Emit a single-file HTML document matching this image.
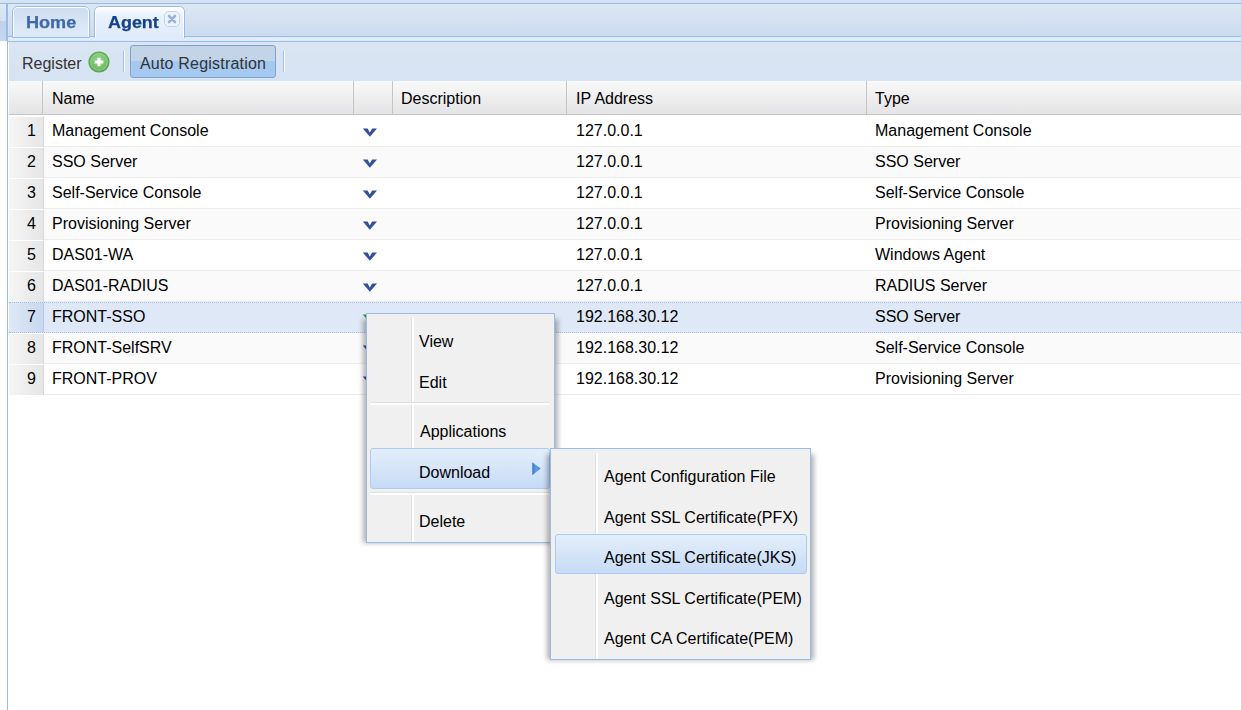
<!DOCTYPE html>
<html><head><meta charset="utf-8"><style>
*{box-sizing:border-box;margin:0;padding:0}
html,body{width:1241px;height:710px;overflow:hidden;background:#fff;font-family:"Liberation Sans",sans-serif;font-size:16px;color:#000;position:relative}
.abs{position:absolute}
#topbar{position:absolute;left:0;top:0;width:1241px;height:3px;background:#d6e2f1}
#topline{position:absolute;left:0;top:3px;width:1241px;height:1px;background:#99bbe8}
#leftstrip{position:absolute;left:0;top:4px;width:6px;height:37px;background:linear-gradient(#dfe9f6 0,#d3e1f3 17px,#bfd3ee 17px,#c4d7f0 37px)}
#leftline{position:absolute;left:6px;top:4px;width:2px;height:37px;background:#99bbe8}
#panelline{position:absolute;left:7px;top:41px;width:1px;height:669px;background:#99bbe8}
#tabbar{position:absolute;left:8px;top:4px;width:1233px;height:32px;background:linear-gradient(#dde7f4,#ccdbef)}
#strip{position:absolute;left:7px;top:36px;width:1234px;height:6px;background:#deecfd;border-top:1px solid #99bbe8;border-bottom:1px solid #99bbe8}
.tab{position:absolute;top:6px;border:1px solid #99bbe8;border-bottom:none;border-radius:6px 6px 0 0;font-weight:bold;font-size:16px;}
.tab .in{position:absolute;left:0;top:0;right:0;bottom:0;border:1px solid #fff;border-bottom:none;border-radius:5px 5px 0 0}
#tab1{left:12px;width:78px;background:linear-gradient(#cfddf0,#e0ebf9);color:#3e69a6;height:32px;border-bottom:1px solid #99bbe8}
#tab2{left:94px;width:91px;background:linear-gradient(#ffffff 0,#e9f1fb 9px,#dfeafa 100%);color:#15428b;height:32px}
.tab span{position:absolute;top:6px;line-height:20px}
#close{position:absolute;left:69px;top:4px;width:16px;height:16px}
#toolbar{position:absolute;left:9px;top:42px;width:1232px;height:39px;background:linear-gradient(#dbe5f3,#d6e3f2)}
.tbtext{position:absolute;color:#333;line-height:20px}
.sep{position:absolute;top:51px;width:2px;height:21px;border-left:1px solid #98c0f4;border-right:1px solid #fff}
#autobtn{position:absolute;left:130px;top:45px;width:146px;height:33px;border:1px solid #7fa3cf;border-radius:3px;background:linear-gradient(#c4d4e8 0,#c4d4e8 15px,#a5c8f0 15px,#a6c9f1 100%)}
#hdr{position:absolute;left:9px;top:81px;width:1232px;height:34px;background:linear-gradient(#f9f9f9,#e4e4e6);border-bottom:1px solid #c5c5c5}
.hsep{position:absolute;top:81px;width:1px;height:33px;background:#c5c5c5}
.htext{position:absolute;top:89px;line-height:20px;color:#000}
.row{position:absolute;left:9px;width:1232px;height:31px;background:#fff;border-top:1px solid #fff;border-bottom:1px solid #ededed}
.row.alt{background:#fafafa;border-top-color:#fafafa}
.row.sel{background:#dfe8f6;border-top:1px dotted #a3bae9;border-bottom:1px dotted #a3bae9}
.num{position:absolute;left:0;top:-1px;width:35px;height:31px;border-top:1px solid #fff;background:linear-gradient(90deg,#f5f5f5,#e6e6e6);border-right:1px solid #d8d8d8}
.sel .num{top:0;height:29px;border-top:none;background:linear-gradient(90deg,#dfe8f6,#c8d8ef);border-right:1px solid #b0c6ea}
.num span{position:absolute;right:7px;top:4px;line-height:20px}
.c{position:absolute;top:4px;line-height:20px;white-space:nowrap}
.name{left:43px}
.ip{left:567px}
.type{left:866px}
.menu{position:absolute;background:#f0f0f0;border:1px solid #99bbe8}
.shd{position:absolute;background:rgba(0,0,0,0.30);filter:blur(2.5px)}
.mi{position:absolute;line-height:20px;color:#000;white-space:nowrap}
.vsep{position:absolute;width:3px;border-left:1px solid #e0e0e0;background:#fff}
.hs{position:absolute;height:3px;border-top:1px solid #e0e0e0;background:#fff}
.hl{position:absolute;border:1px solid #a9cbf5;border-radius:3px;background:linear-gradient(#e3eefb,#c7dbf6)}
</style></head><body>
<div id="topbar"></div><div id="topline"></div>
<div id="leftstrip"></div>
<div id="tabbar"></div>
<div id="strip"></div><div id="leftline"></div>
<div class="tab" id="tab1"><div class="in"></div><span style="left:13px;transform:scaleX(1.13);transform-origin:0 0;-webkit-text-stroke:0.25px">Home</span></div>
<div class="tab" id="tab2"><div class="in"></div><span style="left:13px;transform:scaleX(1.12);transform-origin:0 0;-webkit-text-stroke:0.25px">Agent</span>
<svg id="close" viewBox="0 0 16 16"><path d="M3.5 0.5h9l3 3v9l-3 3h-9l-3-3v-9z" fill="#edf3fb" stroke="#c2d3ec"/><path d="M5 5l6 6M11 5l-6 6" stroke="#9cb0d4" stroke-width="2.6" stroke-linecap="round"/></svg></div>
<div id="panelline"></div>
<div id="toolbar"></div>
<div class="tbtext" style="left:22px;top:54px">Register</div>
<svg class="abs" style="left:88px;top:51px" width="22" height="22" viewBox="0 0 22 22"><defs><radialGradient id="gg" cx="50%" cy="40%" r="60%"><stop offset="0" stop-color="#9ad694"/><stop offset="0.6" stop-color="#78c46e"/><stop offset="1" stop-color="#62b057"/></radialGradient></defs><circle cx="11" cy="11" r="10.6" fill="#5da552"/><circle cx="11" cy="11" r="9.4" fill="url(#gg)"/><circle cx="11" cy="11" r="8.2" fill="none" stroke="#aee0a8" stroke-width="0.9" opacity="0.6"/><path d="M11 6.7v8.6M6.7 11h8.6" stroke="#fff" stroke-width="3.1"/></svg>
<div class="sep" style="left:123px"></div>
<div id="autobtn"></div>
<div class="tbtext" style="left:140px;top:54px;letter-spacing:0.2px">Auto Registration</div>
<div class="sep" style="left:283px"></div>
<div id="hdr"></div>
<div class="abs" style="left:9px;top:115px;width:1232px;height:1px;background:#fff"></div>
<div class="hsep" style="left:42px"></div>
<div class="hsep" style="left:353px"></div>
<div class="hsep" style="left:392px"></div>
<div class="hsep" style="left:566px"></div>
<div class="hsep" style="left:866px"></div>
<div class="htext" style="left:52px">Name</div>
<div class="htext" style="left:401px">Description</div>
<div class="htext" style="left:576px">IP Address</div>
<div class="htext" style="left:875px">Type</div>
<div class="row" style="top:116px">
<div class="num"><span>1</span></div>
<div class="c name">Management Console</div>
<svg class="abs" style="left:346px;top:11px" width="24" height="12" viewBox="355 128 24 12"><polygon points="362.8,128.6 367.6,128.6 369.8,132.4 372.2,128.6 377,128.6 369.9,136.8" fill="#33509a"/></svg>
<div class="c ip">127.0.0.1</div>
<div class="c type">Management Console</div>
</div>
<div class="row alt" style="top:147px">
<div class="num"><span>2</span></div>
<div class="c name">SSO Server</div>
<svg class="abs" style="left:346px;top:11px" width="24" height="12" viewBox="355 128 24 12"><polygon points="362.8,128.6 367.6,128.6 369.8,132.4 372.2,128.6 377,128.6 369.9,136.8" fill="#33509a"/></svg>
<div class="c ip">127.0.0.1</div>
<div class="c type">SSO Server</div>
</div>
<div class="row" style="top:178px">
<div class="num"><span>3</span></div>
<div class="c name">Self-Service Console</div>
<svg class="abs" style="left:346px;top:11px" width="24" height="12" viewBox="355 128 24 12"><polygon points="362.8,128.6 367.6,128.6 369.8,132.4 372.2,128.6 377,128.6 369.9,136.8" fill="#33509a"/></svg>
<div class="c ip">127.0.0.1</div>
<div class="c type">Self-Service Console</div>
</div>
<div class="row alt" style="top:209px">
<div class="num"><span>4</span></div>
<div class="c name">Provisioning Server</div>
<svg class="abs" style="left:346px;top:11px" width="24" height="12" viewBox="355 128 24 12"><polygon points="362.8,128.6 367.6,128.6 369.8,132.4 372.2,128.6 377,128.6 369.9,136.8" fill="#33509a"/></svg>
<div class="c ip">127.0.0.1</div>
<div class="c type">Provisioning Server</div>
</div>
<div class="row" style="top:240px">
<div class="num"><span>5</span></div>
<div class="c name">DAS01-WA</div>
<svg class="abs" style="left:346px;top:11px" width="24" height="12" viewBox="355 128 24 12"><polygon points="362.8,128.6 367.6,128.6 369.8,132.4 372.2,128.6 377,128.6 369.9,136.8" fill="#33509a"/></svg>
<div class="c ip">127.0.0.1</div>
<div class="c type">Windows Agent</div>
</div>
<div class="row alt" style="top:271px">
<div class="num"><span>6</span></div>
<div class="c name">DAS01-RADIUS</div>
<svg class="abs" style="left:346px;top:11px" width="24" height="12" viewBox="355 128 24 12"><polygon points="362.8,128.6 367.6,128.6 369.8,132.4 372.2,128.6 377,128.6 369.9,136.8" fill="#33509a"/></svg>
<div class="c ip">127.0.0.1</div>
<div class="c type">RADIUS Server</div>
</div>
<div class="row sel" style="top:302px">
<div class="num"><span>7</span></div>
<div class="c name">FRONT-SSO</div>
<svg class="abs" style="left:346px;top:11px" width="24" height="12" viewBox="355 128 24 12"><polygon points="362.8,128.6 367.6,128.6 369.8,132.4 372.2,128.6 377,128.6 369.9,136.8" fill="#1a9a2a"/></svg>
<div class="c ip">192.168.30.12</div>
<div class="c type">SSO Server</div>
</div>
<div class="row alt" style="top:333px">
<div class="num"><span>8</span></div>
<div class="c name">FRONT-SelfSRV</div>
<svg class="abs" style="left:346px;top:11px" width="24" height="12" viewBox="355 128 24 12"><polygon points="362.8,128.6 367.6,128.6 369.8,132.4 372.2,128.6 377,128.6 369.9,136.8" fill="#33509a"/></svg>
<div class="c ip">192.168.30.12</div>
<div class="c type">Self-Service Console</div>
</div>
<div class="row" style="top:364px">
<div class="num"><span>9</span></div>
<div class="c name">FRONT-PROV</div>
<svg class="abs" style="left:346px;top:11px" width="24" height="12" viewBox="355 128 24 12"><polygon points="362.8,128.6 367.6,128.6 369.8,132.4 372.2,128.6 377,128.6 369.9,136.8" fill="#33509a"/></svg>
<div class="c ip">192.168.30.12</div>
<div class="c type">Provisioning Server</div>
</div>
<div class="shd" style="left:363px;top:319px;width:195px;height:224px"></div>
<div class="menu" style="left:366px;top:313px;width:189px;height:230px">
  <div class="vsep" style="left:44px;top:4px;height:84px"></div>
  <div class="hs" style="left:3px;top:88px;width:180px"></div>
  <div class="vsep" style="left:44px;top:91px;height:84px"></div>
  <div class="hl" style="left:3px;top:134px;width:180px;height:41px"></div>
  <div class="hs" style="left:3px;top:178px;width:180px"></div>
  <div class="vsep" style="left:44px;top:181px;height:47px"></div>
  <div class="mi" style="left:52px;top:18px">View</div>
  <div class="mi" style="left:52px;top:59px">Edit</div>
  <div class="mi" style="left:53px;top:108px">Applications</div>
  <div class="mi" style="left:52px;top:149px">Download</div>
  <svg class="abs" style="left:165px;top:148px" width="9" height="14" viewBox="0 0 9 14"><defs><linearGradient id="ag" x1="0" y1="0" x2="1" y2="0"><stop offset="0" stop-color="#2f73d0"/><stop offset="0.45" stop-color="#5f9de6"/><stop offset="1" stop-color="#3d7fd6"/></linearGradient></defs><polygon points="0.3,0.2 8.6,6.6 0.3,13.2" fill="url(#ag)"/></svg>
  <div class="mi" style="left:52px;top:198px">Delete</div>
</div>
<div class="shd" style="left:547px;top:454px;width:267px;height:206px"></div>
<div class="menu" style="left:550px;top:448px;width:261px;height:212px">
  <div class="vsep" style="left:44px;top:4px;height:206px"></div>
  <div class="hl" style="left:4px;top:85px;width:252px;height:40px"></div>
  <div class="mi" style="left:53px;top:18px">Agent Configuration File</div>
  <div class="mi" style="left:53px;top:59px">Agent SSL Certificate(PFX)</div>
  <div class="mi" style="left:53px;top:99px">Agent SSL Certificate(JKS)</div>
  <div class="mi" style="left:53px;top:140px">Agent SSL Certificate(PEM)</div>
  <div class="mi" style="left:53px;top:180px">Agent CA Certificate(PEM)</div>
</div>
</body></html>
